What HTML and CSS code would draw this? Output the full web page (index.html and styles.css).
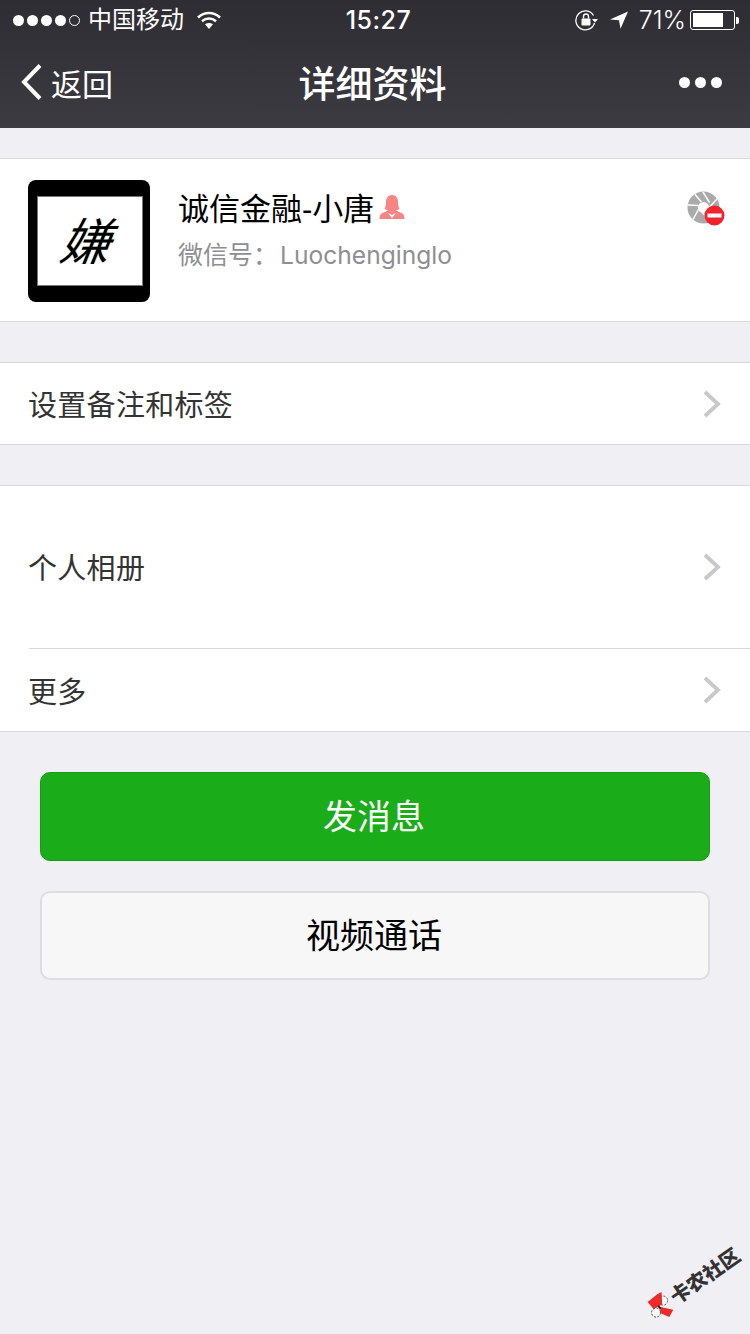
FILE: index.html
```
<!DOCTYPE html>
<html lang="zh-CN">
<head>
<meta charset="utf-8">
<title>详细资料</title>
<link rel="stylesheet" href="styles.css">
</head>
<body>
<div class="page">
  <header class="topbar">
    <div class="status">
      <div class="status-left">
        <span class="dots"><i></i><i></i><i></i><i></i><i class="empty"></i></span>
        <span class="carrier">中国移动</span>
        <svg class="wifi" width="24" height="18" viewBox="0 0 24 18"><path d="M1 6.500C7.500.5 16.500.5 23 6.500" fill="none" stroke="#fff" stroke-width="2.600"/><path d="M5 10.200C9.200 6.600 14.800 6.600 19 10.200" fill="none" stroke="#fff" stroke-width="2.600"/><path d="M8 13.300C10.400 11.400 13.600 11.400 16 13.300L12 18Z" fill="#fff"/></svg>
      </div>
      <div class="time">15:27</div>
      <div class="status-right">
        <svg width="24" height="22" viewBox="0 0 24 22"><path d="M18.500 6.500A9.500 9.500 0 1 0 19.500 14" fill="none" stroke="#fff" stroke-width="1.300"/><path d="M17 10h6l-3 3.500z" fill="#fff"/><rect x="6.500" y="9.500" width="9" height="7" rx="1" fill="#fff"/><path d="M8.500 9.500V7.500a2.500 2.500 0 0 1 5 0v2" fill="none" stroke="#fff" stroke-width="1.400"/></svg>
        <svg class="loc" width="20" height="20" viewBox="0 0 20 20"><path d="M19 1.500 1 9.500l9 .8 1.500 8.500z" fill="#fff"/></svg>
        <span class="pct">71%</span>
        <span class="battery"><span class="level"></span></span><span class="cap"></span>
      </div>
    </div>
    <nav class="nav">
      <div class="back">
        <svg width="24" height="38" viewBox="0 0 24 38"><path d="M20 2.500 4 19l16 16.500" fill="none" stroke="#fff" stroke-width="4"/></svg>
        <span>返回</span>
      </div>
      <h1 class="title">详细资料</h1>
      <div class="more"><i></i><i></i><i></i></div>
    </nav>
  </header>

  <section class="group profile">
    <div class="avatar"><div class="avatar-inner"><span class="avatar-glyph">嫌</span></div></div>
    <div class="info">
      <div class="name">诚信金融-小唐
        <svg class="gender" width="26" height="26" viewBox="0 0 26 26"><path d="M13 1c4 0 6 3 6 7 0 3 .5 5 1.500 7l-3.500 1.500 6.500 3c1.500 1 2 3 2 5.500H.5c0-2.500.5-4.500 2-5.500l6.500-3L5.500 15c1-2 1.500-4 1.500-7 0-4 2-7 6-7z" fill="#f78585"/><path d="m9 19 4 2 4-2-4 5z" fill="#fff"/></svg>
      </div>
      <div class="wxid"><span class="wxid-label">微信号：</span><span class="wxid-value">Luochenginglo</span></div>
    </div>
    <div class="moments-off">
      <svg width="38" height="38" viewBox="0 0 38 38">
        <circle cx="16.500" cy="16.500" r="16" fill="#aaa"/>
        <g stroke="#fff" stroke-width="1.500"><path d="M16 1 22.500 11.500"/><path d="M30 8 22 16.500"/><path d="M32 21 21 21.500"/><path d="M24 30.500 15.500 22"/><path d="M6 28.500 11.500 18.500"/><path d="M1 14 11.500 14.500"/><path d="M8 3.500 14.500 11"/></g>
        <circle cx="16.500" cy="16.500" r="5.500" fill="#fff"/>
        <circle cx="27.500" cy="24.500" r="10" fill="#f4222d"/>
        <rect x="20.500" y="22.500" width="14" height="4" fill="#fff"/>
      </svg>
    </div>
  </section>

  <section class="group row-one">
    <div class="row row-tag"><span class="row-label">设置备注和标签</span><svg class="chev" width="18" height="28" viewBox="0 0 18 28"><path d="M2 2 15 14 2 26" fill="none" stroke="#c7c7cc" stroke-width="3.800"/></svg></div>
  </section>

  <section class="group row-two">
    <div class="row row-album"><span class="row-label">个人相册</span><svg class="chev" width="18" height="28" viewBox="0 0 18 28"><path d="M2 2 15 14 2 26" fill="none" stroke="#c7c7cc" stroke-width="3.800"/></svg></div>
    <div class="divider"></div>
    <div class="row row-more"><span class="row-label">更多</span><svg class="chev" width="18" height="28" viewBox="0 0 18 28"><path d="M2 2 15 14 2 26" fill="none" stroke="#c7c7cc" stroke-width="3.800"/></svg></div>
  </section>

  <div class="actions">
    <button class="btn btn-green"><span class="btn-label">发消息</span></button>
    <button class="btn btn-light"><span class="btn-label">视频通话</span></button>
  </div>

  <div class="watermark">
    <svg class="wm-logo" width="26" height="26" viewBox="0 0 26 26"><circle cx="15.500" cy="8.500" r="4.500" fill="#fff" stroke="#444" stroke-width="1" stroke-dasharray="2 1.500"/><circle cx="8.500" cy="20.500" r="4.500" fill="#fff" stroke="#444" stroke-width="1" stroke-dasharray="2 1.500"/><path d="M0 10 10 2l2 12-6 3zM10 2l4-2 .5 12-2.500 2zM13 15l12.700 2.700-4 7.300-9.400-4z" fill="#ee2a2a"/><path d="m11 13 3 3-1.500 1.500-2.500-3z" fill="#222"/></svg>
    <span class="wm-text">卡农社区</span>
  </div>
</div>
</body>
</html>
```

FILE: styles.css
```
* { box-sizing: border-box; }
html, body { margin: 0; padding: 0; }
body {
  font-family: "Liberation Sans", "Noto Sans CJK SC", sans-serif;
  background: #efeff4;
}
.page {
  position: relative;
  width: 750px;
  height: 1334px;
  overflow: hidden;
  background: #efeff4;
}
.topbar {
  height: 128px;
  background: linear-gradient(#2e2d33, #3c3b41);
  color: #fff;
}
.status {
  height: 40px;
  padding: 0 11px 0 13px;
  display: grid;
  grid-template-columns: 1fr auto 1fr;
  align-items: center;
  font-size: 24px;
}
.status-left, .status-right { display: flex; align-items: center; }
.status-right { justify-content: flex-end; }
.dots { display: flex; gap: 3px; margin-right: 8px; }
.dots i { width: 11px; height: 11px; border-radius: 50%; background: #fff; }
.dots i.empty { background: none; border: 1px solid #fff; }
.carrier { font-size: 24px; line-height: 40px; }
.wifi { margin-left: 13px; }
.time {
  margin-left: 5px;
  font-family: "Inter", "Liberation Sans", sans-serif;
  font-size: 25px;
  font-weight: 500;
  letter-spacing: 0.5px;
}
.loc { margin-left: 10px; }
.pct {
  font-family: "Inter", "Liberation Sans", sans-serif;
  font-weight: 300;
  font-size: 25px;
  margin: 0 4px 0 10px;
}
.battery {
  display: block;
  width: 45px;
  height: 20px;
  padding: 2px;
  border: 1px solid #fff;
  border-radius: 3px;
}
.level { display: block; width: 30px; height: 14px; background: #fff; }
.cap { display: block; width: 3px; height: 7px; margin-left: 1px; background: #fff; border-radius: 0 2px 2px 0; }
.nav {
  position: relative;
  height: 88px;
  padding: 0 28px 0 20px;
  display: flex;
  align-items: center;
  justify-content: space-between;
}
.back { display: flex; align-items: center; gap: 7px; font-size: 31px; margin-top: -4px; }
.title {
  flex: 1;
  margin: -5px 0 0;
  padding-right: 47px;
  text-align: center;
  font-size: 37px;
  font-weight: 500;
}
.more { display: flex; gap: 5px; margin-top: -4px; }
.more i { width: 11px; height: 11px; border-radius: 50%; background: #fff; }

.group {
  background: #fff;
  border-top: 1px solid #d9d9d9;
  border-bottom: 1px solid #d9d9d9;
}
.profile {
  margin-top: 30px;
  height: 164px;
  padding: 21px 25px 0 28px;
  display: flex;
  align-items: flex-start;
}
.avatar {
  width: 122px;
  height: 122px;
  flex: none;
  padding: 16px 7px 16px 9px;
  background: #000;
  border-radius: 8px;
}
.avatar-inner {
  height: 90px;
  background: #fff;
  border: 1px solid #777;
  display: flex;
  align-items: center;
  justify-content: center;
  line-height: 1;
}
.avatar-glyph {
  display: block;
  margin-top: 4px;
  font-size: 50px;
  font-weight: 400;
  color: #000;
  transform: skewX(-22deg);
  text-shadow: 1px 0 rgba(0, 190, 255, .35), -1px 0 rgba(255, 180, 0, .35);
}
.info { flex: 1; margin-left: 28px; }
.name {
  display: flex;
  align-items: center;
  gap: 5px;
  height: 52px;
  font-size: 31px;
  color: #000;
}
.gender { margin-top: 1px; }
.wxid { margin-top: 5px; font-size: 25px; line-height: 36px; color: #8e8e93; display: flex; }
.wxid-label { width: 102px; }
.wxid-value { font-family: "Inter", "Liberation Sans", sans-serif; font-size: 24.6px; }
.moments-off { margin-top: 11px; }

.row-one { margin-top: 40px; }
.row-two { margin-top: 40px; }
.row {
  display: flex;
  align-items: center;
  justify-content: space-between;
  padding: 0 29px 0 28px;
  font-size: 29px;
  color: #333;
}
.row-label { letter-spacing: 0.3px; margin-top: -2px; }
.row-tag { height: 81px; }
.row-album { height: 162px; }
.row-more { height: 82px; }
.row-more .row-label { margin-top: 0; }
.divider { height: 1px; margin-left: 29px; background: #d9d9d9; }

.actions {
  margin-top: 40px;
  padding: 0 40px;
  display: flex;
  flex-direction: column;
  gap: 30px;
}
.btn {
  display: block;
  width: 100%;
  height: 89px;
  border-radius: 10px;
  font-family: inherit;
  font-size: 34px;
  padding: 0 2px 5px 0;
}
.btn-green {
  background: #1aad19;
  border: 1px solid #179b16;
  color: #fff;
}
.btn-light {
  background: #f7f7f7;
  border: 2px solid #dedee0;
  color: #000;
}

.watermark {
  position: absolute;
  left: 640px;
  top: 1266px;
  width: 110px;
  height: 30px;
  display: flex;
  align-items: center;
  transform: rotate(-35deg);
  color: #333;
  white-space: nowrap;
}
.wm-logo { flex: none; transform: rotate(35deg); }
.wm-text { font-size: 20px; font-weight: 900; }
```
